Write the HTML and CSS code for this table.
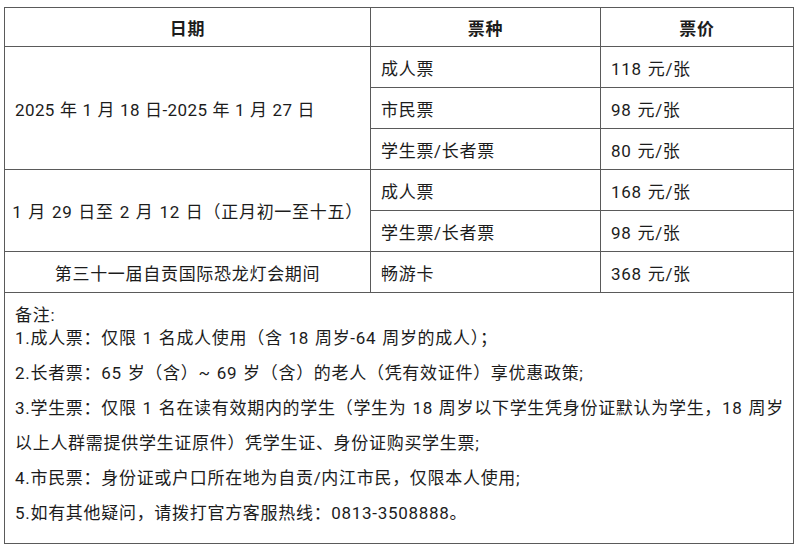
FILE: index.html
```html
<!DOCTYPE html>
<html lang="zh-CN">
<head>
<meta charset="utf-8">
<link rel="stylesheet" href="styles.css">
</head>
<body>
<div class="page">
<table class="tickets">
  <colgroup>
    <col class="c-date">
    <col class="c-type">
    <col class="c-price">
  </colgroup>
  <thead>
    <tr class="head">
      <th>日期</th>
      <th>票种</th>
      <th>票价</th>
    </tr>
  </thead>
  <tbody>
    <tr class="row">
      <td class="date date-left" rowspan="3">2025 年 1 月 18 日-2025 年 1 月 27 日</td>
      <td class="cell">成人票</td>
      <td class="cell">118 元/张</td>
    </tr>
    <tr class="row">
      <td class="cell">市民票</td>
      <td class="cell">98 元/张</td>
    </tr>
    <tr class="row">
      <td class="cell">学生票/长者票</td>
      <td class="cell">80 元/张</td>
    </tr>
    <tr class="row">
      <td class="date" rowspan="2">1 月 29 日至 2 月 12 日（正月初一至十五）</td>
      <td class="cell">成人票</td>
      <td class="cell">168 元/张</td>
    </tr>
    <tr class="row">
      <td class="cell">学生票/长者票</td>
      <td class="cell">98 元/张</td>
    </tr>
    <tr class="row">
      <td class="date">第三十一届自贡国际恐龙灯会期间</td>
      <td class="cell">畅游卡</td>
      <td class="cell">368 元/张</td>
    </tr>
    <tr>
      <td class="notes" colspan="3">
        <p class="notes-title">备注:</p>
        <p class="note">1.成人票：仅限 1 名成人使用（含 18 周岁-64 周岁的成人）；</p>
        <p class="note">2.长者票：65 岁（含）~ 69 岁（含）的老人（凭有效证件）享优惠政策;</p>
        <p class="note">3.学生票：仅限 1 名在读有效期内的学生（学生为 18 周岁以下学生凭身份证默认为学生，18 周岁以上人群需提供学生证原件）凭学生证、身份证购买学生票;</p>
        <p class="note">4.市民票：身份证或户口所在地为自贡/内江市民，仅限本人使用;</p>
        <p class="note">5.如有其他疑问，请拨打官方客服热线：0813-3508888。</p>
      </td>
    </tr>
  </tbody>
</table>
</div>
</body>
</html>
```

FILE: styles.css
```css
html, body {
  margin: 0;
  padding: 0;
  background: #ffffff;
}
body {
  font-family: Roboto, "Noto Sans CJK SC", sans-serif;
  color: #1c1c1c;
  font-size: 17px;
  letter-spacing: 0.7px;
  word-spacing: 1px;
}
.page {
  padding: 7px 0 0 4px;
}
.tickets {
  border-collapse: collapse;
  width: 789px;
  table-layout: fixed;
}
.c-date { width: 366px; }
.c-type { width: 230px; }
.c-price { width: 193px; }
.tickets th,
.tickets td {
  border: 1px solid #5a5a5a;
  padding: 0;
}
.head th {
  height: 38px;
  font-weight: 700;
  text-align: center;
  vertical-align: middle;
}
.row td {
  height: 40px;
  vertical-align: middle;
}
.cell {
  padding-left: 10px !important;
  text-align: left;
}
.date {
  text-align: center;
}
.date-left {
  text-align: left;
  padding-left: 10px !important;
  letter-spacing: 0.4px;
  word-spacing: 0.5px;
}
.notes {
  padding: 10px 8px 10px 10px !important;
  height: 230px;
  vertical-align: top;
}
.notes p {
  margin: 0;
}
.notes-title {
  line-height: 24px;
  margin-bottom: -6px !important;
}
.note {
  line-height: 35px;
}
```
